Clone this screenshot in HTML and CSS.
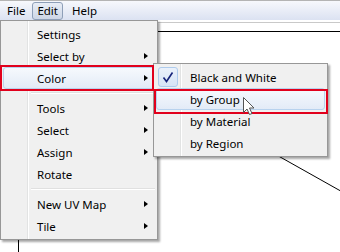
FILE: index.html
```html
<!DOCTYPE html>
<html lang="en">
<head>
    <meta charset="UTF-8">
    <title>Edit menu</title>
    <link rel="stylesheet" href="styles.css">
</head>
<body>
    <div class="menubar">
        <span class="menubar-item">File</span>
        <span class="menubar-item open">Edit</span>
        <span class="menubar-item">Help</span>
    </div>

    <div class="workspace">
        <div class="canvas">
            <svg class="wire" width="345" height="230" viewBox="0 0 345 230">
                <line x1="200" y1="111.5" x2="345" y2="193" stroke="#000" stroke-width="1"/>
            </svg>
        </div>
    </div>

    <div class="menu main-menu">
        <div class="menu-item">Settings</div>
        <div class="menu-item">Select by<span class="arrow"></span></div>
        <div class="menu-item hover">Color<span class="arrow"></span></div>
        <div class="separator"></div>
        <div class="menu-item">Tools<span class="arrow"></span></div>
        <div class="menu-item">Select<span class="arrow"></span></div>
        <div class="menu-item">Assign<span class="arrow"></span></div>
        <div class="menu-item">Rotate</div>
        <div class="separator"></div>
        <div class="menu-item">New UV Map<span class="arrow"></span></div>
        <div class="menu-item">Tile<span class="arrow"></span></div>
    </div>

    <div class="menu sub-menu">
        <div class="menu-item checked">
            <span class="check">
                <svg width="12" height="11" viewBox="0 0 12 11">
                    <path d="M1.5 5.5 L4.5 9.5 L10.5 0.5" fill="none" stroke="#16237a" stroke-width="1.6"/>
                </svg>
            </span>
            Black and White
        </div>
        <div class="menu-item hover">by Group</div>
        <div class="menu-item">by Material</div>
        <div class="menu-item">by Region</div>
    </div>

    <div class="mark mark-color"></div>
    <div class="mark mark-group"></div>

    <svg class="cursor" width="14" height="21" viewBox="0 0 14 21">
        <path d="M1.5 1.5 L1.5 16.5 L5 13 L7.5 18.5 L10 17.5 L7.5 12 L12 12 Z" fill="#fff" stroke="#555" stroke-width="1" stroke-linejoin="round"/>
    </svg>
</body>
</html>
```

FILE: styles.css
```css
body {
    margin: 0;
    width: 340px;
    height: 252px;
    overflow: hidden;
    background-color: #fff;
    font-family: "Noto Sans", "Open Sans", sans-serif;
    font-size: 11.5px;
    color: #000;
    position: relative;
}
.menubar {
    height: 19px;
    border-top: 1px solid #b4b4b4;
    background: linear-gradient(#f7f8fc, #dbe2f2);
    display: flex;
    align-items: center;
    padding-left: 1px;
}
.menubar-item {
    padding: 0 5px;
    height: 16px;
    line-height: 15px;
    margin-right: 1px;
    border: 1px solid transparent;
    border-radius: 3px;
}
.menubar-item.open {
    padding: 0 4px;
    margin-right: 3px;
    border-color: #8e9fb8;
    background: linear-gradient(#e8edf6, #cdd6e6);
}
.workspace {
    height: 229px;
    border-top: 1px solid #c9c9c9;
    margin-top: 2px;
}
.canvas {
    margin: 8px 0 0 18px;
    height: 230px;
    border-top: 1px solid #000;
    border-left: 1px solid #000;
    position: relative;
}
.wire {
    position: absolute;
    left: -18px;
    top: -31px;
}
.menu {
    position: absolute;
    background-color: #f0f0f0;
    background-image: linear-gradient(to right, transparent 26px, #e2e3e3 26px, #e2e3e3 27px, #fff 27px, #fff 28px, transparent 28px);
    border: 1px solid #979797;
    padding: 2px;
    box-shadow: 2px 2px 2px rgba(0, 0, 0, 0.35);
}
.main-menu {
    left: 0;
    top: 20px;
    width: 152px;
}
.sub-menu {
    left: 153px;
    top: 63px;
    width: 169px;
}
.menu-item {
    display: flex;
    align-items: center;
    height: 22px;
    padding-left: 33px;
    box-sizing: border-box;
    border: 1px solid transparent;
    border-radius: 3px;
    position: relative;
}
.menu-item.hover {
    border-color: #b8d2ee;
    background: linear-gradient(#f6f9fd, #e3ebf7);
}
.arrow {
    margin-left: auto;
    margin-right: 6px;
    border-left: 4px solid #000;
    border-top: 3.5px solid transparent;
    border-bottom: 3.5px solid transparent;
}
.separator {
    height: 0;
    margin: 3px 0 3px 28px;
    border-top: 1px solid #e0e0e0;
    border-bottom: 1px solid #fff;
}
.check {
    position: absolute;
    left: 1px;
    top: 0;
    width: 20px;
    height: 20px;
    box-sizing: border-box;
    border: 1px solid #aecbec;
    border-radius: 3px;
    background: linear-gradient(#eaf1fb, #d6e4f6);
    display: flex;
    align-items: center;
    justify-content: center;
}
.mark {
    position: absolute;
    border: 2px solid #e1001c;
    box-sizing: border-box;
}
.mark-color {
    left: 0;
    top: 65px;
    width: 154px;
    height: 26px;
}
.mark-group {
    left: 154px;
    top: 89px;
    width: 174px;
    height: 25px;
}
.cursor {
    position: absolute;
    left: 242px;
    top: 96px;
}
```
